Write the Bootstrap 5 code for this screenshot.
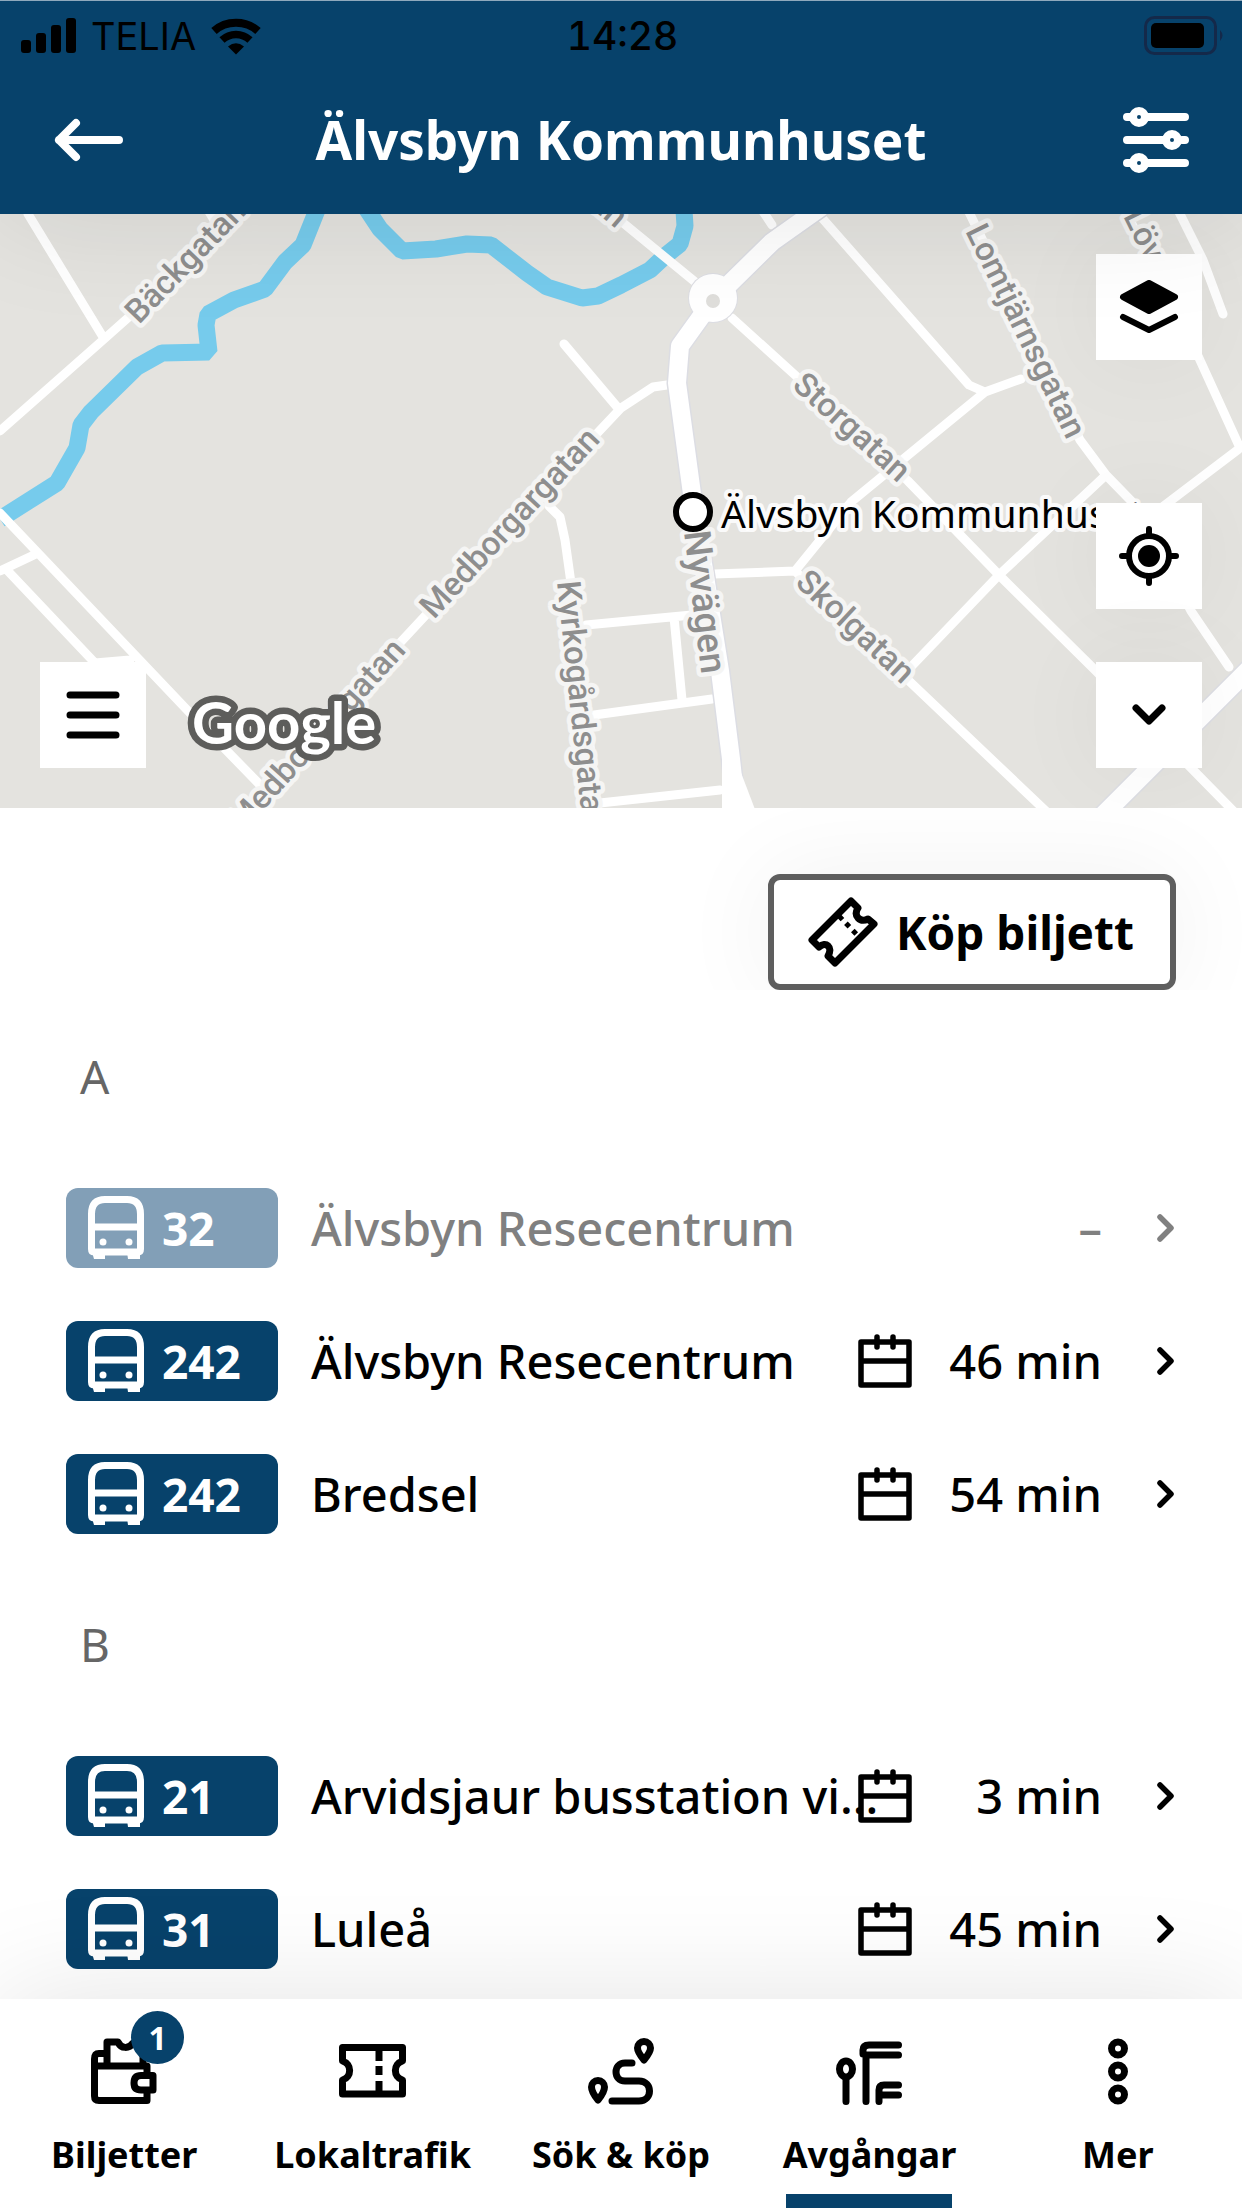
<!DOCTYPE html>
<html lang="sv">
<head>
<meta charset="utf-8">
<meta name="viewport" content="width=device-width, initial-scale=1">
<title>Älvsbyn Kommunhuset</title>
<link rel="stylesheet" href="https://cdn.jsdelivr.net/npm/bootstrap@5.3.0/dist/css/bootstrap.min.css">
<style>
  :root { --brand: #07426b; }
  body { font-family: "Noto Sans", "Open Sans", sans-serif; color: #000; background: #fff; font-size: 46px; line-height: 62px; }
  svg { display: block; flex: none; }
  .ico { fill: none; stroke: currentColor; stroke-width: 7; stroke-linecap: round; stroke-linejoin: round; }
  .ico-thin { stroke-width: 6; }
  .ico-bold { stroke-width: 8; }

  .app-header { background: var(--brand); border-top: 1px solid #8fa9bd; z-index: 2; box-shadow: 0 0 120px rgba(0,0,0,.1); }
  .status-bar { height: 65px; padding: 0 18px 6px 21px; color: #000; font-family: Inter, sans-serif; font-size: 38px; line-height: 48px; }
  .status-side { flex: 1 1 0; gap: 15px; }
  .clock { font-weight: 500; font-size: 39px; font-variant-numeric: tabular-nums; }
  .title-bar { height: 148px; padding: 0 52px; }
  .title-bar h1 { font-size: 53px; line-height: 74px; font-weight: 700; }
  .title-bar .btn { width: 73px; }

  .map-area { height: 594px; background: #e4e3df; }
  .map-area > svg { width: 100%; height: 100%; }
  .road { fill: none; stroke: #fff; stroke-width: 9; stroke-linecap: round; stroke-linejoin: round; }
  .road-main { stroke-width: 18; }
  .road-edge { stroke: #dcdde3; stroke-width: 21; }
  .river { fill: none; stroke: #76cbec; stroke-width: 17; stroke-linejoin: bevel; }
  .street { font: 500 33px Roboto, sans-serif; fill: #8e8e8e; stroke: #f5f5f4; stroke-width: 9; stroke-linejoin: round; paint-order: stroke; }
  .street-main { font-size: 37px; }
  .stop-name { font: 39px "Noto Sans", sans-serif; fill: #000; stroke: #fff; stroke-opacity: .85; stroke-width: 8; stroke-linejoin: round; paint-order: stroke; }
  .map-brand { font: 700 58px Lato, sans-serif; fill: #fff; stroke: #5d5d5b; stroke-width: 13; stroke-linejoin: round; paint-order: stroke; }
  .map-tools { inset: 0; padding: 40px; }
  .map-btn { width: 106px; height: 106px; background: #fff; color: #000; }
  .locate { margin-bottom: 53px; }
  .soft { box-shadow: 0 0 100px rgba(0,0,0,.05); }

  .buy-row { padding: 66px 66px 0; margin-bottom: 2px; }
  .buy-btn { border: 6px solid #5e5e5e; border-radius: 12px; padding: 17px 36px 17px 34px; gap: 18px; font-size: 46px; line-height: 62px; font-weight: 700; background: #fff; box-shadow: 0 0 100px rgba(0,0,0,.06); }
  .stand { height: 169px; padding: 0 80px 2px; font-size: 46px; line-height: 62px; font-weight: 400; color: #666; }
  .departure { height: 133px; padding: 0 66px; color: #000; font-size: 47px; font-weight: 500; }
  .line-tag { width: 212px; height: 80px; flex: none; background: var(--brand); color: #fff; border-radius: 12px; padding-left: 22px; gap: 18px; font-size: 46px; font-weight: 700; margin-right: 33px; }
  .dest { min-width: 0; }
  .cal { margin-left: -20px; }
  .due { width: 190px; flex: none; margin-right: 54px; }
  .gone .line-tag { background: #829fb7; }
  .gone .dest, .gone .due, .gone .next { color: #808080; }

  .tab-nav { background: #fff; height: 209px; z-index: 2; box-shadow: 0 0 120px rgba(0,0,0,.11); font-size: 36px; line-height: 50px; font-weight: 700; }
  .tab { flex: 1 1 0; color: #000; padding-top: 39px; }
  .tab > :first-child { margin-bottom: 25px; }
  .tab.active::after { content: ""; height: 14px; width: 166px; background: var(--brand); margin-top: auto; }
  .count { left: 40px; top: -27px; width: 53px; height: 53px; border-radius: 50%; background: var(--brand); color: #fff; font-size: 32px; line-height: 53px; }
</style>
<script src="https://cdn.jsdelivr.net/npm/bootstrap@5.3.0/dist/js/bootstrap.bundle.min.js"></script>
</head>
<body class="d-flex flex-column vh-100 overflow-hidden">

<svg class="d-none" aria-hidden="true">
  <symbol id="bus" viewBox="0 0 56 63">
    <path d="M3.500 53V18Q3.500 3.500 17 3.500H39Q52.500 3.500 52.500 18V53Q52.500 56 50 56H6Q3.500 56 3.500 53ZM3 31H53" fill="none" stroke="currentColor" stroke-width="7"/>
    <path d="M4 56H17V63H6ZM39 56H52V63H40Z" fill="currentColor"/>
    <circle cx="15" cy="46" r="3.500" fill="currentColor"/><circle cx="41" cy="46" r="3.500" fill="currentColor"/>
  </symbol>
  <symbol id="calendar" viewBox="0 0 54 54">
    <path d="M3 8H51V51H3ZM3 27H51M19 3V13M35 3V13" fill="none" stroke="currentColor" stroke-width="5.500" stroke-linejoin="round" stroke-linecap="round"/>
  </symbol>
  <symbol id="chevron" viewBox="0 0 20 30">
    <path d="M4 4L15 15L4 26" fill="none" stroke="currentColor" stroke-width="5.500" stroke-linejoin="round" stroke-linecap="round"/>
  </symbol>
</svg>

<header class="app-header position-relative flex-shrink-0">
  <div class="status-bar d-flex align-items-end">
    <div class="status-side d-flex align-items-center">
      <svg width="55" height="36" viewBox="0 0 55 36"><rect y="22" width="10" height="13" rx="3"/><rect x="15" y="15" width="10" height="20" rx="3"/><rect x="30" y="7" width="10" height="28" rx="3"/><rect x="45" width="10" height="35" rx="3"/></svg>
      <span>TELIA</span>
      <svg width="50" height="37" viewBox="0 0 50 37"><path d="M3 13C15 2 35 2 47 13" fill="none" stroke="#000" stroke-width="8"/><path d="M11 22C19 14.500 31 14.500 39 22" fill="none" stroke="#000" stroke-width="7.500"/><path d="M17 28.500Q25 22 33 28.500L25 36.500Z"/></svg>
    </div>
    <span class="clock">14:28</span>
    <div class="status-side d-flex justify-content-end">
      <svg width="80" height="48" viewBox="0 0 80 48"><rect x="1.500" y="5.500" width="70" height="36" rx="9" fill="none" stroke="#14294a" stroke-width="3"/><rect x="7" y="11" width="53" height="25" rx="5"/><path d="M76 18Q81 23.500 76 29Z" fill="#14294a"/></svg>
    </div>
  </div>
  <div class="title-bar d-flex align-items-center justify-content-between">
    <button class="btn p-0 border-0 text-white" type="button" aria-label="Tillbaka"><svg class="ico ico-bold" width="73" height="46" viewBox="0 0 73 46"><path d="M67 23H7M24 6L7 23L24 40"/></svg></button>
    <h1 class="m-0 text-white">Älvsbyn Kommunhuset</h1>
    <button class="btn p-0 border-0 text-white d-flex justify-content-end" type="button" aria-label="Filter"><svg class="ico ico-bold" width="68" height="68" viewBox="0 0 68 68"><path d="M5 11H9M25 11H63M5 34H42M60 34H63M5 57H9M25 57H63"/><circle cx="17" cy="11" r="6"/><circle cx="50" cy="34" r="6"/><circle cx="17" cy="57" r="6"/></svg></button>
  </div>
</header>

<main class="flex-grow-1 overflow-hidden">
  <section class="map-area position-relative overflow-hidden" aria-label="Karta">
    <svg viewBox="0 214 1242 594" preserveAspectRatio="xMidYMid slice">
      <path class="river" d="M317 210L303 245L285 262L265 289L234 300L208 314L206 325L209 352L162 353L137 367L91 412L81 425L77 448L57 483L0 519"/>
      <path class="river" d="M366 208L380 229L402 251L436 249L467 244L491 245L527 273L547 287L582 298L598 296L621 285L650 270L665 256L680 244L685 226L684 210"/>
      <path class="road" d="M28 214L103 337M0 431L103 340L130 316L240 210M208 210L214 220M0 513L190 713L265 790M0 571L36 554M6 569L95 663L130 660M564 344L618 408M667 385L653 387L621 408L424 617L240 815M549 506L560 517L565 540L571 583L598 815M586 625L692 615M594 715L712 699M674 617L682 700M600 803L720 790M600 204L694 281M762 210L772 225M815 210L969 385L985 392L1021 379M985 392L851 502L795 571L714 574M732 318L795 375L908 481L999 575L1096 671L1250 828M795 571L908 680L1050 815M1106 475L999 575L908 670M967 208L1080 440L1106 475L1140 510L1191 611L1229 667M1177 208L1203 260L1223 314M1124 208L1199 358L1240 448L1140 524M1240 448L1250 440"/>
      <path class="road road-edge" d="M820 208L772 242L713 300L680 346L677 383L692 494L720 671L731 759L737 815M1250 668L1100 818"/>
      <circle cx="713" cy="298" r="25" fill="#dcdde3"/>
      <path class="road road-main" d="M820 208L772 242L713 300L680 346L677 383L692 494L720 671L731 759L737 815M1250 668L1100 818"/>
      <path d="M722 750L740 770L756 812H722Z" fill="#fff"/>
      <circle cx="713" cy="298" r="24" fill="#fff"/><circle cx="713" cy="301" r="7" fill="#dfdedb"/>
      <text class="street" transform="translate(139 325) rotate(-46)">Bäckgatan</text>
      <text class="street" transform="translate(434 620) rotate(-47)">Medborgargatan</text>
      <text class="street" transform="translate(407 651) rotate(-48)" text-anchor="end">Medborgargatan</text>
      <text class="street" transform="translate(557 582) rotate(84)">Kyrkogårdsgatan</text>
      <text class="street street-main" transform="translate(684 532) rotate(83)">Nyvägen</text>
      <text class="street" transform="translate(791 387) rotate(42)">Storgatan</text>
      <text class="street" transform="translate(794 584) rotate(43)">Skolgatan</text>
      <text class="street" transform="translate(965 231) rotate(64)">Lomtjärnsgatan</text>
      <text class="street" transform="translate(1123 216) rotate(64)">Löv</text>
      <text class="street" transform="translate(616 229) rotate(40)" text-anchor="end">an</text>
      <circle cx="693" cy="512" r="17" fill="#fff" stroke="#000" stroke-width="6"/>
      <text class="stop-name" x="721" y="528">Älvsbyn Kommunhuset</text>
      <text class="map-brand" x="192" y="744">Google</text>
    </svg>
    <div class="map-tools position-absolute d-flex justify-content-between align-items-end">
      <button class="map-btn btn rounded-0 border-0 p-0 d-flex align-items-center justify-content-center" type="button" aria-label="Meny"><svg class="ico" width="54" height="54" viewBox="0 0 54 54"><path d="M4 7H50M4 27H50M4 47H50"/></svg></button>
      <div class="d-flex flex-column h-100">
        <button class="map-btn soft btn rounded-0 border-0 p-0 d-flex align-items-center justify-content-center mb-auto" type="button" aria-label="Kartlager"><svg class="ico ico-thin" width="60" height="54" viewBox="0 0 60 54"><path d="M30 3L56 17L30 31L4 17Z" fill="currentColor"/><path d="M4 37L30 50L56 37"/></svg></button>
        <button class="map-btn locate soft btn rounded-0 border-0 p-0 d-flex align-items-center justify-content-center" type="button" aria-label="Min position"><svg class="ico ico-thin" width="60" height="60" viewBox="0 0 60 60"><circle cx="30" cy="30" r="20"/><circle cx="30" cy="30" r="11" fill="currentColor" stroke="none"/><path d="M30 3V10M30 50V57M3 30H10M50 30H57"/></svg></button>
        <button class="map-btn soft btn rounded-0 border-0 p-0 d-flex align-items-center justify-content-center" type="button" aria-label="Fäll ihop kartan"><svg class="ico" width="34" height="24" viewBox="0 0 34 24"><path d="M4 5L17 18L30 5"/></svg></button>
      </div>
    </div>
  </section>

  <div class="buy-row d-flex justify-content-end overflow-hidden">
    <button class="buy-btn d-flex align-items-center" type="button">
      <svg class="ico" width="70" height="70" viewBox="0 0 70 70"><path d="M43 4L50 11C45 19 52 26 60 22L66 27L27 66L20 59C25 50 18 44 11 50L4 43Z"/><path d="M31 19L52 41" stroke-width="5" stroke-linecap="butt" stroke-dasharray="5 5"/></svg>
      Köp biljett
    </button>
  </div>

  <section>
    <h2 class="stand m-0 d-flex align-items-center">A</h2>
    <a href="#" class="departure gone d-flex align-items-center text-decoration-none">
      <span class="line-tag d-flex align-items-center"><svg width="56" height="63"><use href="#bus"/></svg>32</span>
      <span class="dest flex-grow-1 text-nowrap">Älvsbyn Resecentrum</span>
      <span class="due text-end">–</span>
      <svg class="next" width="20" height="30"><use href="#chevron"/></svg>
    </a>
    <a href="#" class="departure d-flex align-items-center text-decoration-none">
      <span class="line-tag d-flex align-items-center"><svg width="56" height="63"><use href="#bus"/></svg>242</span>
      <span class="dest flex-grow-1 text-nowrap">Älvsbyn Resecentrum</span>
      <svg class="cal" width="54" height="54"><use href="#calendar"/></svg>
      <span class="due text-end">46 min</span>
      <svg class="next" width="20" height="30"><use href="#chevron"/></svg>
    </a>
    <a href="#" class="departure d-flex align-items-center text-decoration-none">
      <span class="line-tag d-flex align-items-center"><svg width="56" height="63"><use href="#bus"/></svg>242</span>
      <span class="dest flex-grow-1 text-nowrap">Bredsel</span>
      <svg class="cal" width="54" height="54"><use href="#calendar"/></svg>
      <span class="due text-end">54 min</span>
      <svg class="next" width="20" height="30"><use href="#chevron"/></svg>
    </a>
  </section>

  <section>
    <h2 class="stand m-0 d-flex align-items-center">B</h2>
    <a href="#" class="departure d-flex align-items-center text-decoration-none">
      <span class="line-tag d-flex align-items-center"><svg width="56" height="63"><use href="#bus"/></svg>21</span>
      <span class="dest flex-grow-1 text-nowrap">Arvidsjaur busstation vi...</span>
      <svg class="cal" width="54" height="54"><use href="#calendar"/></svg>
      <span class="due text-end">3 min</span>
      <svg class="next" width="20" height="30"><use href="#chevron"/></svg>
    </a>
    <a href="#" class="departure d-flex align-items-center text-decoration-none">
      <span class="line-tag d-flex align-items-center"><svg width="56" height="63"><use href="#bus"/></svg>31</span>
      <span class="dest flex-grow-1 text-nowrap">Luleå</span>
      <svg class="cal" width="54" height="54"><use href="#calendar"/></svg>
      <span class="due text-end">45 min</span>
      <svg class="next" width="20" height="30"><use href="#chevron"/></svg>
    </a>
  </section>
</main>

<nav class="tab-nav position-relative d-flex flex-shrink-0">
  <a href="#" class="tab d-flex flex-column align-items-center text-decoration-none">
    <span class="position-relative">
      <svg class="ico" width="66" height="67" viewBox="0 0 66 67"><path d="M15 15.500H8Q3.500 15.500 3.500 21V58Q3.500 62.500 8 62.500H56V54M3 28H56V37M16 28V4H27C30 11 38 11 42 5H52V28M62 37.500H50Q43 37.500 43 45Q43 52 50 52H62Z"/></svg>
      <span class="count position-absolute text-center">1</span>
    </span>
    Biljetter
  </a>
  <a href="#" class="tab d-flex flex-column align-items-center text-decoration-none">
    <svg class="ico" width="67" height="67" viewBox="0 -6 67 67"><path d="M3.500 3.500H63.500V17C54 20 54 33 63.500 36V50H3.500V36C13 33 13 20 3.500 17Z"/><path d="M40 3V17M40 22V31M40 37V50" stroke-linecap="butt"/></svg>
    Lokaltrafik
  </a>
  <a href="#" class="tab d-flex flex-column align-items-center text-decoration-none">
    <svg class="ico" width="66" height="67" viewBox="0 0 66 67"><path d="M24 63H51C65 63 65 43 51 43H37C25 43 25 25 37 25H44"/><path d="M10 62Q3.500 54 3.500 49A6.500 6.500 0 0 1 16.500 49Q16.500 54 10 62ZM56 22Q49.500 14 49.500 10A6.500 6.500 0 0 1 62.500 10Q62.500 14 56 22Z"/></svg>
    Sök &amp; köp
  </a>
  <a href="#" class="tab active d-flex flex-column align-items-center text-decoration-none" aria-current="page">
    <svg class="ico" width="66" height="67" viewBox="0 0 66 67"><ellipse cx="10" cy="31" rx="6.500" ry="8"/><path d="M10 40V63.500M30 63.500V17H62.500M62.500 7H33Q27 7 27 12V16M62.500 47H48Q43 47 43 52V63.500M46 57H62.500"/></svg>
    Avgångar
  </a>
  <a href="#" class="tab d-flex flex-column align-items-center text-decoration-none">
    <svg class="ico" width="20" height="67" viewBox="0 0 20 67"><circle cx="10" cy="10.500" r="6.500"/><circle cx="10" cy="33.500" r="6.500"/><circle cx="10" cy="56.500" r="6.500"/></svg>
    Mer
  </a>
</nav>
</body>
</html>
